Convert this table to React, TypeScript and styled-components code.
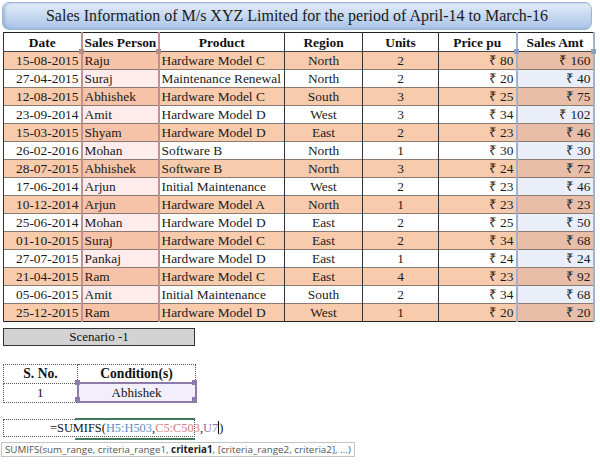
import React from 'react';
import styled, { createGlobalStyle } from 'styled-components';

const serif = "'Liberation Serif', 'Times New Roman', serif";

const GlobalStyle = createGlobalStyle`
  html, body {
    margin: 0;
    padding: 0;
    background: #fff;
  }
  body {
    font-family: ${serif};
    color: #111;
  }
`;

type Row = [string, string, string, string, number, number];

const rows: Row[] = [
  ['15-08-2015', 'Raju', 'Hardware Model C', 'North', 2, 80],
  ['27-04-2015', 'Suraj', 'Maintenance Renewal', 'North', 2, 20],
  ['12-08-2015', 'Abhishek', 'Hardware Model C', 'South', 3, 25],
  ['23-09-2014', 'Amit', 'Hardware Model D', 'West', 3, 34],
  ['15-03-2015', 'Shyam', 'Hardware Model D', 'East', 2, 23],
  ['26-02-2016', 'Mohan', 'Software B', 'North', 1, 30],
  ['28-07-2015', 'Abhishek', 'Software B', 'North', 3, 24],
  ['17-06-2014', 'Arjun', 'Initial Maintenance', 'West', 2, 23],
  ['10-12-2014', 'Arjun', 'Hardware Model A', 'North', 1, 23],
  ['25-06-2014', 'Mohan', 'Hardware Model D', 'East', 2, 25],
  ['01-10-2015', 'Suraj', 'Hardware Model C', 'East', 2, 34],
  ['27-07-2015', 'Pankaj', 'Hardware Model D', 'East', 1, 24],
  ['21-04-2015', 'Ram', 'Hardware Model C', 'East', 4, 23],
  ['05-06-2015', 'Amit', 'Initial Maintenance', 'South', 2, 34],
  ['25-12-2015', 'Ram', 'Hardware Model D', 'West', 1, 20],
];

const columns = [
  { title: 'Date', width: 78, align: 'right' },
  { title: 'Sales Person', width: 77, align: 'left' },
  { title: 'Product', width: 126, align: 'left' },
  { title: 'Region', width: 78, align: 'center' },
  { title: 'Units', width: 76, align: 'center' },
  { title: 'Price pu', width: 78, align: 'right' },
  { title: 'Sales Amt', width: 77, align: 'right' },
];

// background per column, orange row vs plain row
const shade = (col: number, orange: boolean) => {
  if (col === 1) return orange ? '#f6c3a8' : '#fdeceb';
  if (col === 6) return orange ? '#e9bea8' : '#e9eef8';
  return orange ? '#f8cbad' : '#ffffff';
};

function App() {
  return (
    <Page>
      <GlobalStyle />
      <Report>
        <TitleBar>Sales Information of M/s XYZ Limited for the period of April-14 to March-16</TitleBar>

        <TableWrap>
          <SalesTable>
            <colgroup>
              {columns.map((c) => (
                <col key={c.title} style={{ width: c.width }} />
              ))}
            </colgroup>
            <thead>
              <tr>
                {columns.map((c, i) => (
                  <HeadCell key={c.title} $col={i}>
                    {c.title}
                  </HeadCell>
                ))}
              </tr>
            </thead>
            <tbody>
              {rows.map((r, ri) => {
                const orange = ri % 2 === 0;
                const cells = [r[0], r[1], r[2], r[3], String(r[4]), `₹ ${r[5]}`, `₹ ${r[4] * r[5]}`];
                return (
                  <tr key={ri}>
                    {cells.map((v, ci) => (
                      <Cell key={ci} $col={ci} $align={columns[ci].align} $bg={shade(ci, orange)}>
                        {v}
                      </Cell>
                    ))}
                  </tr>
                );
              })}
            </tbody>
          </SalesTable>
          <Handle $x={76} $y={17} $color="#b88a8a" />
          <Handle $x={153} $y={17} $color="#b88a8a" />
          <Handle $x={511} $y={17} $color="#8aa0bd" />
          <Handle $x={588} $y={17} $color="#8aa0bd" />
        </TableWrap>
      </Report>

      <ScenarioBox>Scenario -1</ScenarioBox>

      <Criteria>
        <CondWrap>
          <CondTable>
            <colgroup>
              <col style={{ width: 74 }} />
              <col style={{ width: 118 }} />
            </colgroup>
            <thead>
              <tr>
                <CondHead>S. No.</CondHead>
                <CondHead>Condition(s)</CondHead>
              </tr>
            </thead>
            <tbody>
              <tr>
                <CondCell>1</CondCell>
                <CondCell $picked>Abhishek</CondCell>
              </tr>
            </tbody>
          </CondTable>
          <Handle $x={72} $y={16} $color="#8e7aa8" />
          <Handle $x={189} $y={16} $color="#8e7aa8" />
          <Handle $x={72} $y={33} $color="#8e7aa8" />
          <Handle $x={189} $y={33} $color="#8e7aa8" />
        </CondWrap>

        <FormulaBlock>
          <FormulaWrap>
            <FormulaCell>
              =SUMIFS(<RefText $color="#5b8fc4">H5:H503</RefText>,<RefText $color="#d27e7e">C5:C503</RefText>,
              <RefText $color="#8a76aa">U7</RefText>
              <Caret />)
            </FormulaCell>
            <GreenFrame />
          </FormulaWrap>
          <Tip>
            SUMIFS(sum_range, criteria_range1, <b>criteria1</b>, [criteria_range2, criteria2], ...)
          </Tip>
        </FormulaBlock>
      </Criteria>
    </Page>
  );
}

export default App;

const Page = styled.div`
  width: 600px;
  height: 469px;
  padding: 2px 0 0 0;
  box-sizing: border-box;
  overflow: hidden;
  display: flex;
  flex-direction: column;
  align-items: flex-start;
  gap: 6px;
`;

const Report = styled.section`
  display: flex;
  flex-direction: column;
  gap: 2px;
  padding-left: 2px;
`;

const TitleBar = styled.div`
  width: 590px;
  height: 28px;
  box-sizing: border-box;
  border: 1px solid #9cb6d8;
  border-radius: 7px;
  background: linear-gradient(to bottom, #e4edf9 0%, #c8daf1 45%, #aac5e8 100%);
  box-shadow: inset 2px 0 3px rgba(90, 120, 170, 0.35);
  font-family: ${serif};
  font-size: 16px;
  line-height: 26px;
  text-align: center;
  color: #1a1a1a;
  white-space: nowrap;
`;

const TableWrap = styled.div`
  position: relative;
  margin-left: 1px;
  width: 590px;
`;

const SalesTable = styled.table`
  border-collapse: collapse;
  table-layout: fixed;
  width: 590px;
  font-family: ${serif};
  font-size: 13.4px;
  border: 1px solid #222;
`;

const colBorder = (col: number) => {
  if (col === 1) return '2px solid #c29090';
  if (col === 6) return '2px solid #9fb3cf';
  return '1px solid #333';
};

const HeadCell = styled.th<{ $col: number }>`
  height: 18px;
  padding: 0 2px;
  font-weight: bold;
  text-align: center;
  background: #fff;
  border-bottom: 1px solid #444;
  border-left: ${(p) => colBorder(p.$col)};
  border-right: ${(p) => colBorder(p.$col)};
  white-space: nowrap;
  overflow: hidden;
  line-height: 17px;
`;

const Cell = styled.td<{ $col: number; $align: string; $bg: string }>`
  height: 17px;
  padding: 0 2px;
  line-height: 17px;
  text-align: ${(p) => p.$align};
  background: ${(p) => p.$bg};
  border-top: 1px solid #8a7a72;
  border-left: ${(p) => colBorder(p.$col)};
  border-right: ${(p) => colBorder(p.$col)};
  white-space: nowrap;
  overflow: hidden;
  color: #1a1a1a;
`;

const Handle = styled.span<{ $x: number; $y: number; $color: string }>`
  position: absolute;
  left: ${(p) => p.$x}px;
  top: ${(p) => p.$y}px;
  width: 5px;
  height: 5px;
  background: ${(p) => p.$color};
`;

const ScenarioBox = styled.div`
  margin-left: 3px;
  width: 192px;
  height: 18px;
  box-sizing: border-box;
  border: 1px solid #333;
  background: #d3d3d3;
  font-family: ${serif};
  font-size: 13px;
  line-height: 16px;
  text-align: center;
`;

const Criteria = styled.section`
  display: flex;
  flex-direction: column;
  align-items: flex-start;
  gap: 16px;
  padding: 12px 0 0 3px;
`;

const CondWrap = styled.div`
  position: relative;
  width: 192px;
`;

const CondTable = styled.table`
  border-collapse: collapse;
  table-layout: fixed;
  width: 192px;
  font-family: ${serif};
  font-size: 13.6px;
`;

const CondHead = styled.th`
  height: 17px;
  padding: 0;
  line-height: 17px;
  font-weight: bold;
  text-align: center;
  border: 1px dotted #555;
`;

const CondCell = styled.td<{ $picked?: boolean }>`
  height: 17px;
  padding: 0;
  line-height: 17px;
  font-size: 13px;
  text-align: center;
  border: ${(p) => (p.$picked ? '2px solid #8e7aa8' : '1px dotted #555')};
  background: ${(p) => (p.$picked ? '#f2eefa' : '#fff')};
`;

const FormulaBlock = styled.div`
  display: flex;
  flex-direction: column;
  align-items: flex-start;
  gap: 5px;
  margin-left: -2px;
`;

const FormulaWrap = styled.div`
  position: relative;
  width: 192px;
  margin-left: 2px;
`;

const FormulaCell = styled.div`
  height: 18px;
  box-sizing: border-box;
  border: 1px dotted #555;
  padding-left: 46px;
  font-family: ${serif};
  font-size: 12.4px;
  line-height: 16px;
  white-space: nowrap;
  overflow: visible;
`;

const RefText = styled.span<{ $color: string }>`
  color: ${(p) => p.$color};
`;

const Caret = styled.span`
  display: inline-block;
  width: 1px;
  height: 13px;
  background: #111;
  vertical-align: -2px;
`;

const GreenFrame = styled.span`
  position: absolute;
  left: 72px;
  top: -1px;
  width: 120px;
  height: 18px;
  border-top: 2px solid #3f7a5c;
  border-bottom: 2px solid #3f7a5c;
`;

const Tip = styled.div`
  padding: 0 3px;
  border: 1px solid #c4c4c4;
  background: #fff;
  color: #555;
  font-family: 'Open Sans', 'DejaVu Sans', sans-serif;
  font-size: 9.8px;
  line-height: 13px;
  white-space: nowrap;

  b {
    color: #222;
  }
`;
